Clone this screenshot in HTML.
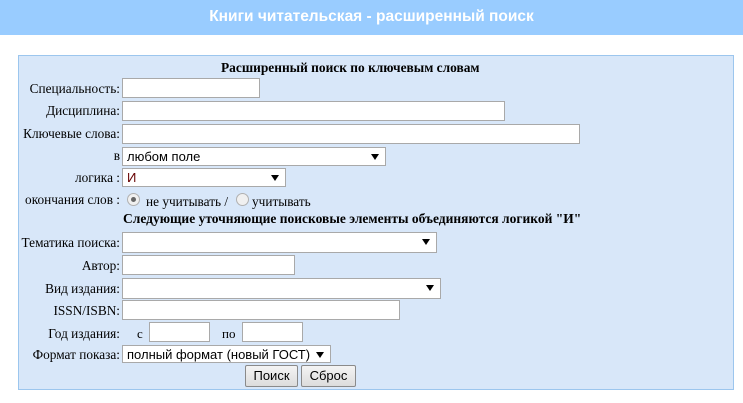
<!DOCTYPE html>
<html><head><meta charset="utf-8"><style>
*{box-sizing:border-box;margin:0;padding:0}
body{width:743px;height:403px;background:#fff;position:relative;font-family:"Liberation Serif",serif;font-size:13px;color:#000;overflow:hidden}
.hd{position:absolute;left:0;top:0;width:743px;height:35px;background:#99ccff;color:#fff;font:bold 15.5px "Liberation Sans",sans-serif;text-align:center;line-height:33px}
.pn{position:absolute;left:18px;top:55px;width:716px;height:335px;background:#d8e7f9;border:1px solid #9cc6ee}
.a{position:absolute;white-space:nowrap}
.l{position:absolute;text-align:right;right:623px;white-space:nowrap;line-height:16px;font-size:13.3px}
.i{position:absolute;background:#fff;border:1px solid #a9a9a9;height:20px}
.s{position:absolute;background:#fff;border:1px solid #a9a9a9;height:19px;font:13px "Liberation Sans",sans-serif;padding-left:4px;line-height:17px}
.s:after{content:"";position:absolute;right:6px;top:6px;border-left:4px solid transparent;border-right:4px solid transparent;border-top:6px solid #000}
.r{position:absolute;width:13px;height:13px;border-radius:50%;border:1px solid #b0b0b0;background:#f0f0f0}
.b{position:absolute;top:365px;height:22px;border:1px solid #8a8a8a;background:linear-gradient(#f4f4f4,#dcdcdc);font:13px "Liberation Sans",sans-serif;text-align:center;line-height:20px;border-radius:2px}
</style></head><body>
<div class="hd">Книги читательская - расширенный поиск</div>
<div class="pn"></div>
<div class="a" style="left:221px;top:60px;font-weight:bold;font-size:13.4px">Расширенный поиск по ключевым словам</div>
<div class="l" style="top:81px">Специальность:</div><div class="i" style="left:122px;top:78px;width:138px"></div>
<div class="l" style="top:103px">Дисциплина:</div><div class="i" style="left:122px;top:101px;width:383px"></div>
<div class="l" style="top:126px">Ключевые слова:</div><div class="i" style="left:122px;top:124px;width:458px"></div>
<div class="l" style="top:148px">в</div><div class="s" style="left:122px;top:147px;width:264px">любом поле</div>
<div class="l" style="top:170px">логика :</div><div class="s" style="left:122px;top:168px;width:164px;color:#600">И</div>
<div class="l" style="top:192px">окончания слов :</div>
<div class="r" style="left:127px;top:193px"></div><div class="a" style="left:131px;top:197px;width:5px;height:5px;border-radius:50%;background:#666"></div>
<div class="a" style="left:146px;top:194px;font-size:13.3px">не учитывать /</div>
<div class="r" style="left:236px;top:193px"></div>
<div class="a" style="left:252px;top:194px;font-size:13.3px">учитывать</div>
<div class="a" style="left:123px;top:211px;font-weight:bold;font-size:13.5px">Следующие уточняющие поисковые элементы объединяются логикой "И"</div>
<div class="l" style="top:235px">Тематика поиска:</div><div class="s" style="left:122px;top:232px;width:315px;height:21px"></div>
<div class="l" style="top:258px">Автор:</div><div class="i" style="left:122px;top:255px;width:173px"></div>
<div class="l" style="top:281px">Вид издания:</div><div class="s" style="left:122px;top:278px;width:319px;height:21px"></div>
<div class="l" style="top:303px">ISSN/ISBN:</div><div class="i" style="left:122px;top:300px;width:278px"></div>
<div class="l" style="top:326px">Год издания:</div>
<div class="a" style="left:137px;top:326px">с</div><div class="i" style="left:149px;top:322px;width:61px"></div>
<div class="a" style="left:222px;top:326px">по</div><div class="i" style="left:242px;top:322px;width:61px"></div>
<div class="l" style="top:347px">Формат показа:</div><div class="s" style="left:122px;top:345px;width:209px;height:18px;padding-right:18px">полный формат (новый ГОСТ)</div>
<div class="b" style="left:245px;width:53px">Поиск</div>
<div class="b" style="left:301px;width:55px">Сброс</div>
</body></html>
